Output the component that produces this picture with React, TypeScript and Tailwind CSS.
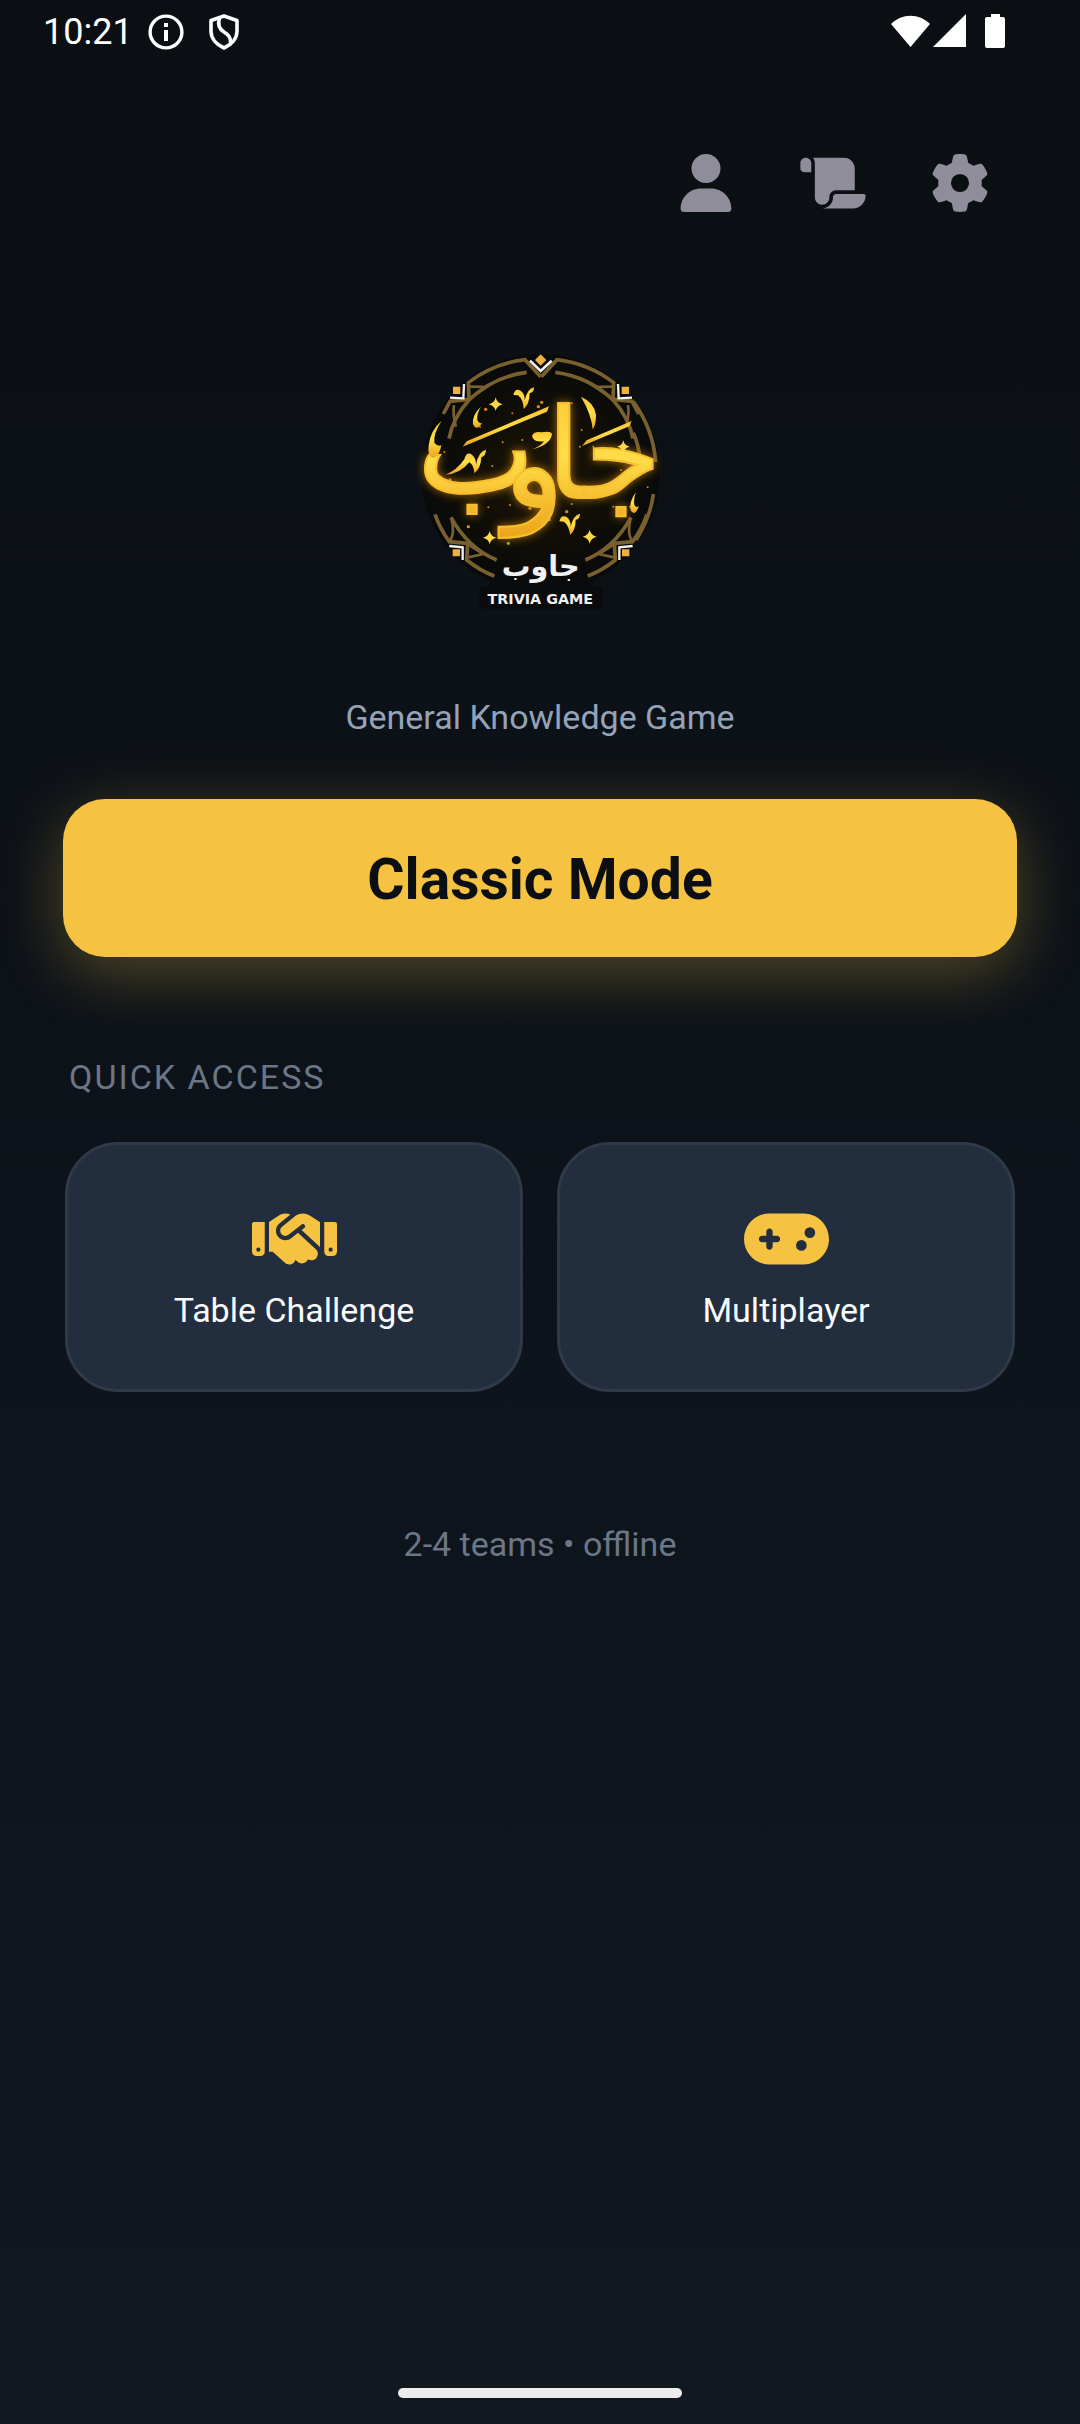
import React from 'react';
import { FaUser, FaScroll, FaGear, FaHandshake, FaGamepad } from 'react-icons/fa6';

const headerActions = [
  { id: 1, label: 'Profile', icon: FaUser },
  { id: 2, label: 'Rules', icon: FaScroll },
  { id: 3, label: 'Settings', icon: FaGear },
];

const quickModes = [
  { id: 1, label: 'Table Challenge', icon: FaHandshake },
  { id: 2, label: 'Multiplayer', icon: FaGamepad },
];

const sparkles = [
  { x: 287, y: 223, r: 21 },
  { x: 670, y: 350, r: 19 },
  { x: 269, y: 623, r: 20 },
  { x: 569, y: 620, r: 21 },
];

const dust = [
  [257, 238], [367, 330], [308, 337], [425, 217], [240, 290], [515, 220], [415, 230], [478, 265],
  [133, 366], [182, 463], [265, 532], [277, 408], [222, 530], [337, 250], [663, 420], [618, 370],
  [640, 530], [743, 472], [205, 590], [515, 522], [545, 300], [390, 535], [330, 525], [580, 350],
  [150, 450], [240, 470], [350, 505], [500, 545], [540, 350], [450, 570], [325, 640], [690, 530],
];

// One half of the frame, mirrored for the other side
const FrameHalf = () => (
  <>
    <g fill="none" stroke="#79602f" strokeWidth="11">
      <path d="M422 140 375 89A348 348 0 0 0 205 158L207 208 150 214 130 252" />
      <path d="M380 127A306 306 0 0 0 207 210C175 245 155 285 147 326" />
      <path d="M207 170 260 171 210 205M162 225C158 250 162 270 168 290" strokeWidth="8" />
      <path d="M105 553C115 582 130 610 148 635L203 640 200 690Q240 722 283 738" />
      <path d="M153 562C185 620 230 665 290 690" />
      <path d="M155 570Q165 610 150 633M207 645 250 672 205 682" strokeWidth="8" />
    </g>
    <path d="M150 203 190 205 192 162M148 648 188 652 188 690" fill="none" stroke="#f3f1ec" strokeWidth="7" />
    <path d="M159 170h22v22h-22zM158 658h22v21h-22z" fill="#eeb13b" />
  </>
);

const GameLogo = () => (
  <svg viewBox="0 0 840 900" className="w-[280px] h-[300px]" role="img" aria-label="جاوب Trivia Game">
    <defs>
      <linearGradient id="gold" x1="0" y1="0" x2="0" y2="1">
        <stop offset="0" stopColor="#f9c632" />
        <stop offset="0.5" stopColor="#ffdd48" />
        <stop offset="1" stopColor="#eca41c" />
      </linearGradient>
      <radialGradient id="disc">
        <stop offset="0" stopColor="#1d1605" />
        <stop offset="0.7" stopColor="#0d0c07" />
        <stop offset="1" stopColor="#080a0b" />
      </radialGradient>
      <filter id="glow" x="-20%" y="-20%" width="140%" height="140%">
        <feDropShadow dx="0" dy="0" stdDeviation="14" floodColor="#d98a0c" floodOpacity="0.75" />
      </filter>
    </defs>

    <circle cx="422" cy="430" r="358" fill="url(#disc)" />
    <path d="M270 735H580V770H596Q608 770 608 784V822Q608 836 594 836H252Q238 836 238 822V784Q238 770 252 770H270Z" fill="#090b0c" />

    <FrameHalf />
    <g transform="translate(846 0) scale(-1 1)">
      <FrameHalf />
    </g>
    <g fill="none" stroke="#79602f" strokeWidth="11">
      <path d="M700 215C740 270 762 330 767 396M700 308Q716 345 720 386M760 492Q752 560 708 630" />
    </g>
    <path d="M390 92 422 123 455 92" fill="none" stroke="#f3f1ec" strokeWidth="8" />
    <path d="M422 73 439 90 422 107 405 90Z" fill="#eeb13b" />

    <g fill="#d18a1c">
      {dust.map(([x, y], index) => (
        <circle key={index} cx={x} cy={y} r={index % 3 === 0 ? 5 : 3} />
      ))}
    </g>

    {/* The word, with its letters tucked under each other */}
    <text
      fontFamily="'DejaVu Sans', sans-serif"
      fontSize="376"
      textAnchor="middle"
      direction="rtl"
      fill="url(#gold)"
      stroke="#f7bf2c"
      strokeWidth="6"
      filter="url(#glow)"
    >
      <tspan x="612" y="504">جا</tspan>
      <tspan x="402" y="530">و</tspan>
      <tspan x="228" y="490">ب</tspan>
    </text>

    {/* Flourishes around the word */}
    <g fill="url(#gold)">
      <path d="M188 350 200 334 447 229 441 245Z" />
      <path d="M546 348 560 331 695 273 688 289Z" />
      <path d="M543 200Q584 218 588 255 588 285 578 298 575 255 543 200Z" />
      <path d="M396 358Q420 350 432 334 400 338 396 318 402 302 425 307 452 302 456 312 452 345 396 358Z" />
      <path d="M125 272Q100 310 103 338 112 350 124 346 118 380 98 384 82 378 86 345 92 300 125 272Z" />
      <path d="M243 230Q215 255 219 283 229 305 247 278 238 284 232 271 229 252 243 230Z" />
      <path d="M708 487Q686 515 692 541 704 562 717 528 709 536 703 524 700 507 708 487Z" />
      <path d="M340 195Q345 173 362 182 375 192 374 211 382 176 402 172 402 188 389 190 389 222 371 237 370 208 354 196Z" />
      <path d="M478 574Q483 552 500 561 513 571 512 590 520 555 540 551 540 567 527 569 527 601 510 615 508 587 492 575Z" />
      <path d="M193 388Q199 363 216 374 229 386 228 404 236 363 258 359 258 377 244 382 243 414 223 430 222 405 208 397 180 432 137 434 170 421 193 388Z" />
    </g>
    <g fill="#ffd84a">
      {sparkles.map(({ x, y, r }) => (
        <path
          key={`${x}-${y}`}
          d="M0-21Q3-4 21 0 3 4 0 21-3 4-21 0-3-4 0-21Z"
          transform={`translate(${x} ${y}) scale(${r / 21})`}
        />
      ))}
    </g>

    <text x="422" y="739" fill="#f1f1f1" fontFamily="'DejaVu Sans', sans-serif" fontWeight="700" fontSize="86" textAnchor="middle" direction="rtl">جاوب</text>
    <text x="421" y="821" fill="#f1f1f1" fontFamily="'DejaVu Sans', sans-serif" fontWeight="700" fontSize="43" textAnchor="middle">TRIVIA GAME</text>
  </svg>
);

const StatusBar = () => (
  <div className="flex items-center justify-between h-[63px] pl-[43px] pr-[74px] text-white">
    <div className="flex items-center">
      <span className="text-[36px] leading-none">10:21</span>
      <svg viewBox="0 0 36 36" className="w-9 h-9 ml-[15px]" aria-hidden="true">
        <circle cx="18" cy="18" r="15.900" fill="none" stroke="#fff" strokeWidth="3.400" />
        <path d="M16 9h4v4h-4zM16 16h4v11h-4z" fill="#fff" />
      </svg>
      <svg viewBox="0 0 30 36" className="w-[30px] h-9 ml-[25px]" fill="none" stroke="#fff" strokeWidth="3.600" strokeLinejoin="round" aria-hidden="true">
        <path d="M15 2 28 6.500V17C28 24 23 30.500 15 34 7 30.500 2 24 2 17V6.500Z" />
        <path d="M10.500 4C8 12 11 15.500 15 18S22 23 21.500 29" />
      </svg>
    </div>
    <svg viewBox="0 0 115 36" className="w-[115px] h-9" fill="#fff" aria-hidden="true">
      <path d="M0 10C11-1 28-1 39 10L19.500 33Z" />
      <path d="M75 0V33H42Z" />
      <path d="M100 0h9v3h3q2 0 2 2v27q0 2-2 2h-16q-2 0-2-2v-27q0-2 2-2h4z" />
    </svg>
  </div>
);

export default function App() {
  return (
    <div className="flex flex-col min-h-screen bg-gradient-to-b from-[#0b0f13] via-[#0d131a] to-[#111820] font-['Roboto',sans-serif]">
      <StatusBar />

      {/* Header actions */}
      <header className="flex justify-end pt-14 pr-[57px]">
        {headerActions.map(({ id, label, icon: Icon }) => (
          <button key={id} type="button" aria-label={label} className="flex items-center justify-center w-[127px] h-32 text-[#8e8d99]">
            <Icon className="w-[66px] h-[58px]" aria-hidden="true" />
          </button>
        ))}
      </header>

      <main className="flex flex-col grow px-[63px] pt-[83px]">
        <div className="flex flex-col items-center">
          <GameLogo />
          <p className="mt-16 text-[34px] leading-[46px] text-[#94a3b8]">General Knowledge Game</p>
        </div>

        <button
          type="button"
          className="mt-[59px] h-[158px] pt-1 rounded-[42px] bg-[#f5c242] text-[#0b0f14] text-[57px] font-bold shadow-[0_16px_64px_rgba(245,194,66,0.3)]"
        >
          Classic Mode
        </button>

        <section className="px-[2px] pt-[97px]">
          <h2 className="px-1 text-[34px] leading-[46px] tracking-[2px] text-[#6b7686]">QUICK ACCESS</h2>
          <div className="grid grid-cols-2 gap-[34px] mt-[42px]">
            {quickModes.map(({ id, label, icon: Icon }) => (
              <button
                key={id}
                type="button"
                className="flex flex-col items-center justify-center gap-[14px] h-[250px] pt-[3px] rounded-[53px] border-[3px] border-[#2f3947] bg-[#222d3d] text-[#f5c242]"
              >
                <Icon className="w-[85px] h-[68px]" aria-hidden="true" />
                <span className="text-[34px] leading-[46px] text-[#f8fafc]">{label}</span>
              </button>
            ))}
          </div>
        </section>

        <p className="mt-[129px] text-center text-[34px] leading-[46px] text-[#6b7686]">2-4 teams • offline</p>
      </main>

      {/* Gesture bar */}
      <div className="flex justify-center pb-[26px]">
        <div className="w-[284px] h-[10px] rounded-full bg-[#ececed]"></div>
      </div>
    </div>
  );
}
